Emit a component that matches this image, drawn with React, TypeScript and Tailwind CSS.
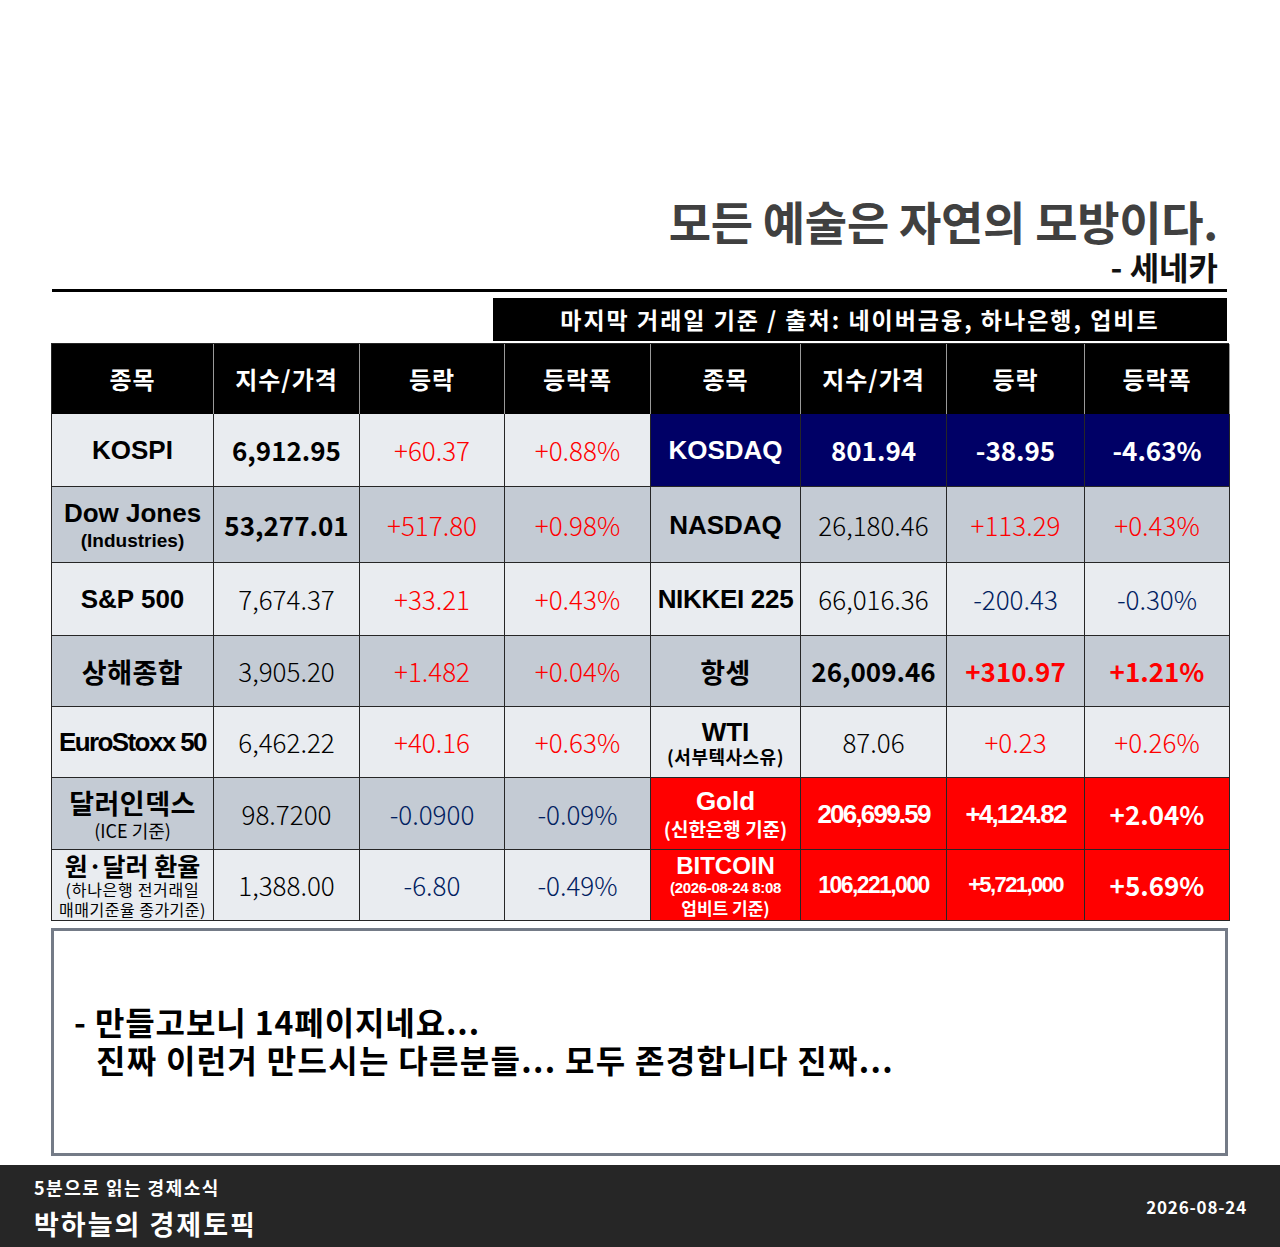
import React from "react";

const GRID = "grid grid-cols-[162px_146px_145px_146px_150px_146px_138px_145px]";
const KR = "font-['Noto_Sans_CJK_KR','Noto_Sans',sans-serif]";
const EN = "font-['Liberation_Sans',Arial,'Noto_Sans_CJK_KR',sans-serif]";

const LIGHT = "bg-[#e9ecf0]";
const DARK = "bg-[#c4cbd4]";
const NAVY = "bg-[#000066]";
const RED = "bg-[#ff0000]";

function Cell({ bg, children, cls = "" }: { bg: string; children: React.ReactNode; cls?: string }) {
  return (
    <div className={`${bg} border-r border-b border-[#262626] flex flex-col items-center justify-center text-center leading-none overflow-hidden ${cls}`}>
      {children}
    </div>
  );
}

const nameEn = `${EN} font-bold text-[26px] text-black`;
const nameKr = `${KR} font-bold text-[27px] text-black tracking-[0.5px]`;
const numB = `${KR} font-bold text-[26px] text-black`;
const numL = `${KR} font-light text-[26px] text-black`;
const pos = `${KR} font-light text-[26px] text-[#ff0000]`;
const neg = `${KR} font-light text-[26px] text-[#002060]`;

export default function App() {
  return (
    <div className="w-[1280px] h-[1247px] bg-white flex flex-col overflow-hidden">
      {/* Quote */}
      <div className="pt-[192px] pr-[62px] flex flex-col items-end">
        <div className={`${KR} font-bold text-[46px] leading-[56px] text-[#404040] tracking-[-0.3px]`}>모든 예술은 자연의 모방이다.</div>
        <div className={`${KR} font-bold text-[32px] leading-[36px] text-[#111]`}>- 세네카</div>
      </div>
      {/* rule */}
      <div className="ml-[52px] mt-[5px] w-[1175px] h-[3px] bg-black" />
      {/* banner */}
      <div className={`ml-[493px] mt-[6px] w-[734px] h-[43px] bg-black flex items-center justify-center ${KR} font-bold text-[23px] tracking-[2px] text-white`}>
        마지막 거래일 기준 / 출처: 네이버금융, 하나은행, 업비트
      </div>
      {/* table */}
      <div className="ml-[51px] mt-[2px] w-[1178px] border-l border-t border-[#262626]">
        {/* header */}
        <div className={`${GRID} h-[70px] bg-black`}>
          {["종목", "지수/가격", "등락", "등락폭", "종목", "지수/가격", "등락", "등락폭"].map((t, i) => (
            <div key={i} className={`flex items-center justify-center border-r border-[#9a9a9a] ${KR} font-bold text-[24px] tracking-[1px] text-white`}>
              {t}
            </div>
          ))}
        </div>
        {/* row 1 */}
        <div className={`${GRID} h-[73px]`}>
          <Cell bg={LIGHT}><span className={nameEn}>KOSPI</span></Cell>
          <Cell bg={LIGHT}><span className={numB}>6,912.95</span></Cell>
          <Cell bg={LIGHT}><span className={pos}>+60.37</span></Cell>
          <Cell bg={LIGHT}><span className={pos}>+0.88%</span></Cell>
          <Cell bg={NAVY}><span className={`${EN} font-bold text-[26px] text-white`}>KOSDAQ</span></Cell>
          <Cell bg={NAVY}><span className={`${KR} font-bold text-[26px] text-white`}>801.94</span></Cell>
          <Cell bg={NAVY}><span className={`${KR} font-bold text-[26px] text-white`}>-38.95</span></Cell>
          <Cell bg={NAVY}><span className={`${KR} font-bold text-[26px] text-white`}>-4.63%</span></Cell>
        </div>
        {/* row 2 */}
        <div className={`${GRID} h-[76px]`}>
          <Cell bg={DARK}>
            <span className={nameEn}>Dow Jones</span>
            <span className={`${EN} font-bold text-[19px] text-black mt-[5px]`}>(Industries)</span>
          </Cell>
          <Cell bg={DARK}><span className={numB}>53,277.01</span></Cell>
          <Cell bg={DARK}><span className={pos}>+517.80</span></Cell>
          <Cell bg={DARK}><span className={pos}>+0.98%</span></Cell>
          <Cell bg={DARK}><span className={nameEn}>NASDAQ</span></Cell>
          <Cell bg={DARK}><span className={numL}>26,180.46</span></Cell>
          <Cell bg={DARK}><span className={pos}>+113.29</span></Cell>
          <Cell bg={DARK}><span className={pos}>+0.43%</span></Cell>
        </div>
        {/* row 3 */}
        <div className={`${GRID} h-[73px]`}>
          <Cell bg={LIGHT}><span className={nameEn}>S&amp;P 500</span></Cell>
          <Cell bg={LIGHT}><span className={numL}>7,674.37</span></Cell>
          <Cell bg={LIGHT}><span className={pos}>+33.21</span></Cell>
          <Cell bg={LIGHT}><span className={pos}>+0.43%</span></Cell>
          <Cell bg={LIGHT}><span className={`${nameEn} tracking-[-0.3px]`}>NIKKEI 225</span></Cell>
          <Cell bg={LIGHT}><span className={numL}>66,016.36</span></Cell>
          <Cell bg={LIGHT}><span className={neg}>-200.43</span></Cell>
          <Cell bg={LIGHT}><span className={neg}>-0.30%</span></Cell>
        </div>
        {/* row 4 */}
        <div className={`${GRID} h-[71px]`}>
          <Cell bg={DARK}><span className={nameKr}>상해종합</span></Cell>
          <Cell bg={DARK}><span className={numL}>3,905.20</span></Cell>
          <Cell bg={DARK}><span className={pos}>+1.482</span></Cell>
          <Cell bg={DARK}><span className={pos}>+0.04%</span></Cell>
          <Cell bg={DARK}><span className={nameKr}>항셍</span></Cell>
          <Cell bg={DARK}><span className={numB}>26,009.46</span></Cell>
          <Cell bg={DARK}><span className={`${KR} font-bold text-[26px] text-[#ff0000]`}>+310.97</span></Cell>
          <Cell bg={DARK}><span className={`${KR} font-bold text-[26px] text-[#ff0000]`}>+1.21%</span></Cell>
        </div>
        {/* row 5 */}
        <div className={`${GRID} h-[71px]`}>
          <Cell bg={LIGHT}><span className={`${nameEn} tracking-[-1.6px]`}>EuroStoxx 50</span></Cell>
          <Cell bg={LIGHT}><span className={numL}>6,462.22</span></Cell>
          <Cell bg={LIGHT}><span className={pos}>+40.16</span></Cell>
          <Cell bg={LIGHT}><span className={pos}>+0.63%</span></Cell>
          <Cell bg={LIGHT}>
            <span className={nameEn}>WTI</span>
            <span className={`${KR} font-bold text-[18px] leading-[20px] text-black mt-[1px] tracking-[0.5px]`}>(서부텍사스유)</span>
          </Cell>
          <Cell bg={LIGHT}><span className={numL}>87.06</span></Cell>
          <Cell bg={LIGHT}><span className={pos}>+0.23</span></Cell>
          <Cell bg={LIGHT}><span className={pos}>+0.26%</span></Cell>
        </div>
        {/* row 6 */}
        <div className={`${GRID} h-[72px]`}>
          <Cell bg={DARK}>
            <span className={`${nameKr} leading-[32px]`}>달러인덱스</span>
            <span className={`${KR} font-normal text-[18px] leading-[22px] text-black`}>(ICE 기준)</span>
          </Cell>
          <Cell bg={DARK}><span className={numL}>98.7200</span></Cell>
          <Cell bg={DARK}><span className={neg}>-0.0900</span></Cell>
          <Cell bg={DARK}><span className={neg}>-0.09%</span></Cell>
          <Cell bg={RED}>
            <span className={`${EN} font-bold text-[26px] leading-[28px] text-white`}>Gold</span>
            <span className={`${KR} font-bold text-[19px] leading-[24px] text-white mt-[2px]`}>(신한은행 기준)</span>
          </Cell>
          <Cell bg={RED}><span className={`${EN} font-bold text-[26px] text-white tracking-[-1.8px]`}>206,699.59</span></Cell>
          <Cell bg={RED}><span className={`${EN} font-bold text-[26px] text-white tracking-[-1.8px]`}>+4,124.82</span></Cell>
          <Cell bg={RED}><span className={`${KR} font-bold text-[26px] text-white`}>+2.04%</span></Cell>
        </div>
        {/* row 7 */}
        <div className={`${GRID} h-[71px]`}>
          <Cell bg={LIGHT}>
            <span className={`${KR} font-bold text-[25px] leading-[28px] text-black`}>원·달러 환율</span>
            <span className={`${KR} font-normal text-[16px] leading-[20px] text-black tracking-[0.7px]`}>(하나은행 전거래일</span>
            <span className={`${KR} font-normal text-[16px] leading-[20px] text-black tracking-[0.5px]`}>매매기준율 종가기준)</span>
          </Cell>
          <Cell bg={LIGHT}><span className={numL}>1,388.00</span></Cell>
          <Cell bg={LIGHT}><span className={neg}>-6.80</span></Cell>
          <Cell bg={LIGHT}><span className={neg}>-0.49%</span></Cell>
          <Cell bg={RED}>
            <span className={`${EN} font-bold text-[24px] leading-[26px] text-white`}>BITCOIN</span>
            <span className={`${EN} font-bold text-[15px] leading-[18px] text-white tracking-[-0.3px]`}>(2026-08-24 8:08</span>
            <span className={`${KR} font-bold text-[17px] leading-[21px] text-white`}>업비트 기준)</span>
          </Cell>
          <Cell bg={RED}><span className={`${EN} font-bold text-[23px] text-white tracking-[-1.6px]`}>106,221,000</span></Cell>
          <Cell bg={RED}><span className={`${EN} font-bold text-[22px] text-white tracking-[-1.6px]`}>+5,721,000</span></Cell>
          <Cell bg={RED}><span className={`${KR} font-bold text-[26px] text-white`}>+5.69%</span></Cell>
        </div>
      </div>
      {/* note box */}
      <div className="ml-[51px] mt-[7px] w-[1177px] h-[228px] border-[3px] border-[#747b87] flex flex-col justify-center pl-[20px] pb-[4px]">
        <div className={`${KR} font-bold text-[32px] leading-[38px] text-black tracking-[0.9px]`}>- 만들고보니 14페이지네요...</div>
        <div className={`${KR} font-bold text-[32px] leading-[38px] text-black pl-[22px] tracking-[1.3px]`}>진짜 이런거 만드시는 다른분들... 모두 존경합니다 진짜...</div>
      </div>
      {/* footer */}
      <div className="mt-auto h-[82px] bg-[#262626] flex items-start justify-between px-[34px]">
        <div className="flex flex-col pt-[10px]">
          <div className={`${KR} font-bold text-[18px] leading-[24px] text-white tracking-[1.5px]`}>5분으로 읽는 경제소식</div>
          <div className={`${KR} font-bold text-[27px] leading-[34px] text-white mt-[8px] tracking-[2px]`}>박하늘의 경제토픽</div>
        </div>
        <div className={`${KR} font-bold text-[17px] leading-[24px] text-white pt-[30px] -mr-[1px] tracking-[0.8px]`}>2026-08-24</div>
      </div>
    </div>
  );
}
